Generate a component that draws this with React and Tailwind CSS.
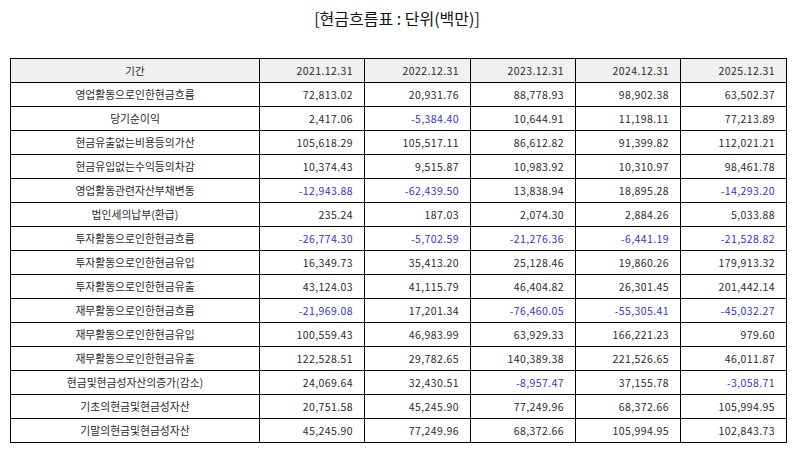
import React from "react";

const cols = ["2021.12.31", "2022.12.31", "2023.12.31", "2024.12.31", "2025.12.31"];
const rows = [
  ["영업활동으로인한현금흐름", "72,813.02", "20,931.76", "88,778.93", "98,902.38", "63,502.37"],
  ["당기순이익", "2,417.06", "-5,384.40", "10,644.91", "11,198.11", "77,213.89"],
  ["현금유출없는비용등의가산", "105,618.29", "105,517.11", "86,612.82", "91,399.82", "112,021.21"],
  ["현금유입없는수익등의차감", "10,374.43", "9,515.87", "10,983.92", "10,310.97", "98,461.78"],
  ["영업활동관련자산부채변동", "-12,943.88", "-62,439.50", "13,838.94", "18,895.28", "-14,293.20"],
  ["법인세의납부(환급)", "235.24", "187.03", "2,074.30", "2,884.26", "5,033.88"],
  ["투자활동으로인한현금흐름", "-26,774.30", "-5,702.59", "-21,276.36", "-6,441.19", "-21,528.82"],
  ["투자활동으로인한현금유입", "16,349.73", "35,413.20", "25,128.46", "19,860.26", "179,913.32"],
  ["투자활동으로인한현금유출", "43,124.03", "41,115.79", "46,404.82", "26,301.45", "201,442.14"],
  ["재무활동으로인한현금흐름", "-21,969.08", "17,201.34", "-76,460.05", "-55,305.41", "-45,032.27"],
  ["재무활동으로인한현금유입", "100,559.43", "46,983.99", "63,929.33", "166,221.23", "979.60"],
  ["재무활동으로인한현금유출", "122,528.51", "29,782.65", "140,389.38", "221,526.65", "46,011.87"],
  ["현금및현금성자산의증가(감소)", "24,069.64", "32,430.51", "-8,957.47", "37,155.78", "-3,058.71"],
  ["기초의현금및현금성자산", "20,751.58", "45,245.90", "77,249.96", "68,372.66", "105,994.95"],
  ["기말의현금및현금성자산", "45,245.90", "77,249.96", "68,372.66", "105,994.95", "102,843.73"],
];

const font = { fontFamily: '"Noto Sans CJK KR", "Noto Sans", sans-serif' };

export default function App() {
  return (
    <div className="w-[794px] h-[452px] bg-white pt-[7px]" style={font}>
      <div className="text-center text-[16px] leading-[22px] text-[#111]">[현금흐름표 : 단위(백만)]</div>
      <div className="mt-[29px] ml-[10px]">
        <table className="border-collapse table-fixed w-[776px] text-[10.5px] text-[#2a2a2a]">
          <colgroup>
            <col className="w-[249px]" />
            <col className="w-[105px]" />
            <col className="w-[106px]" />
            <col className="w-[105px]" />
            <col className="w-[105px]" />
            <col className="w-[106px]" />
          </colgroup>
          <thead>
            <tr className="h-[24px] bg-[#f0f0f0]">
              <th className="border border-black font-normal text-center p-0">기간</th>
              {cols.map((c) => (
                <th key={c} className="border border-black font-normal text-right pr-[11px] p-0 tracking-[0.4px]">{c}</th>
              ))}
            </tr>
          </thead>
          <tbody>
            {rows.map((r) => (
              <tr key={r[0]} className="h-[24px]">
                <td className="border border-black text-center p-0 text-[10.8px]">{r[0]}</td>
                {r.slice(1).map((v, i) => (
                  <td
                    key={i}
                    className={
                      "border border-black text-right p-0 pr-[11px] tracking-[0.4px] " +
                      (v.startsWith("-") ? "text-[#3535c8]" : "")
                    }
                  >
                    {v}
                  </td>
                ))}
              </tr>
            ))}
          </tbody>
        </table>
      </div>
    </div>
  );
}
